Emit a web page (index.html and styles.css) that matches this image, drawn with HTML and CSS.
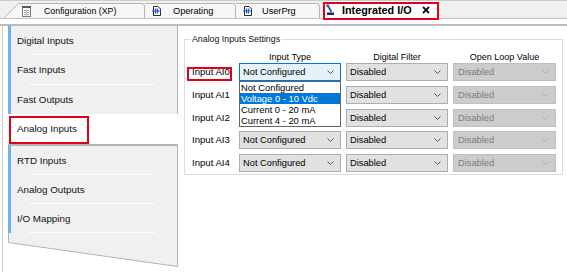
FILE: index.html
```html
<!DOCTYPE html>
<html>
<head>
<meta charset="utf-8">
<link rel="stylesheet" href="styles.css">
</head>
<body>
<div class="tabstrip">
  <svg class="slant" width="15" height="15" viewBox="0 0 15 15"><polygon points="0,15 15,0 15,15" fill="#f6f6f6"/><line x1="0" y1="15" x2="15" y2="0" stroke="#b5b5b5"/></svg>
  <div class="tab tab-config">
    <svg class="ico" width="11" height="11" viewBox="0 0 11 11"><rect x="1.5" y="1.5" width="8" height="9" fill="#fafafa" stroke="#7a7a7a"/><rect x="1" y="0" width="9" height="2" fill="#5a5a5a"/><path d="M3 4.5h5M3 6.5h5M3 8.5h5" stroke="#a8a8a8"/><path d="M5.5 3v7" stroke="#c4c4c4"/></svg>
    <span class="tab-label">Configuration (XP)</span>
  </div>
  <div class="tab tab-op">
    <svg class="ico" width="9" height="10" viewBox="0 0 9 10"><path d="M1.5 0.5H6L8.5 3V9.5H1.5Z" fill="#fff" stroke="#2b2b2b"/><path d="M0 5h9" stroke="#1b5fd6"/><path d="M3.5 2.5v5M5.5 2.5v5" stroke="#1b5fd6" stroke-width="1.3"/></svg>
    <span class="tab-label">Operating</span>
  </div>
  <div class="tab tab-prg">
    <svg class="ico" width="9" height="10" viewBox="0 0 9 10"><path d="M1.5 0.5H6L8.5 3V9.5H1.5Z" fill="#fff" stroke="#2b2b2b"/><path d="M0 5h9" stroke="#1b5fd6"/><path d="M3.5 2.5v5M5.5 2.5v5" stroke="#1b5fd6" stroke-width="1.3"/></svg>
    <span class="tab-label">UserPrg</span>
  </div>
  <div class="tab tab-io active">
    <svg class="ico" width="8" height="11" viewBox="0 0 8 11"><circle cx="1.8" cy="1.8" r="1.5" fill="#1f5fbf"/><path d="M2 2L5.5 8" stroke="#1f5fbf" stroke-width="1.8"/><rect x="1" y="8.5" width="7" height="2.5" fill="#1c2a5a"/></svg>
    <span class="tab-label">Integrated I/O</span>
    <svg class="close" width="8" height="8" viewBox="0 0 8 8"><path d="M1 1L7 7M7 1L1 7" stroke="#111" stroke-width="1.8"/></svg>
  </div>
</div>

<div class="workspace">
  <nav class="sidebar">
    <div class="vgroup">
      <div class="vtab sep">Digital Inputs</div>
      <div class="vtab sep">Fast Inputs</div>
      <div class="vtab">Fast Outputs</div>
    </div>
    <div class="vtab-active">Analog Inputs</div>
    <div class="vgroup lower">
      <div class="vtab sep">RTD Inputs</div>
      <div class="vtab sep">Analog Outputs</div>
      <div class="vtab sep">I/O Mapping</div>
    </div>
    <svg class="tail" width="170" height="34" viewBox="0 0 170 34"><polygon points="0,0 170,0 170,34 0,9" fill="#f0f0f0"/><path d="M0.5 0V9.5L169.5 33.5V0" fill="none" stroke="#b4b4b4"/></svg>
  </nav>

  <section class="content">
    <fieldset class="group">
      <legend>Analog Inputs Settings</legend>
      <div class="cols head">
        <span></span>
        <span>Input Type</span>
        <span>Digital Filter</span>
        <span>Open Loop Value</span>
      </div>
      <div class="cols rows">
        <span class="lbl"><span class="marked">Input AI0</span></span>
        <div class="combo focus">
          <span>Not Configured</span>
          <svg class="chev" width="7" height="4" viewBox="0 0 7 4"><path d="M0.5 0.5L3.5 3.5L6.5 0.5" fill="none" stroke="#555"/></svg>
          <div class="popup">
            <div class="opt">Not Configured</div>
            <div class="opt hl">Voltage 0 - 10 Vdc</div>
            <div class="opt">Current 0 - 20 mA</div>
            <div class="opt">Current 4 - 20 mA</div>
          </div>
        </div>
        <div class="combo"><span>Disabled</span><svg class="chev" width="7" height="4" viewBox="0 0 7 4"><path d="M0.5 0.5L3.5 3.5L6.5 0.5" fill="none" stroke="#555"/></svg></div>
        <div class="combo disabled"><span>Disabled</span><svg class="chev" width="7" height="4" viewBox="0 0 7 4"><path d="M0.5 0.5L3.5 3.5L6.5 0.5" fill="none" stroke="#aaa"/></svg></div>

        <span class="lbl">Input AI1</span>
        <div class="combo covered"></div>
        <div class="combo"><span>Disabled</span><svg class="chev" width="7" height="4" viewBox="0 0 7 4"><path d="M0.5 0.5L3.5 3.5L6.5 0.5" fill="none" stroke="#555"/></svg></div>
        <div class="combo disabled"><span>Disabled</span><svg class="chev" width="7" height="4" viewBox="0 0 7 4"><path d="M0.5 0.5L3.5 3.5L6.5 0.5" fill="none" stroke="#aaa"/></svg></div>

        <span class="lbl">Input AI2</span>
        <div class="combo covered"></div>
        <div class="combo"><span>Disabled</span><svg class="chev" width="7" height="4" viewBox="0 0 7 4"><path d="M0.5 0.5L3.5 3.5L6.5 0.5" fill="none" stroke="#555"/></svg></div>
        <div class="combo disabled"><span>Disabled</span><svg class="chev" width="7" height="4" viewBox="0 0 7 4"><path d="M0.5 0.5L3.5 3.5L6.5 0.5" fill="none" stroke="#aaa"/></svg></div>

        <span class="lbl">Input AI3</span>
        <div class="combo"><span>Not Configured</span><svg class="chev" width="7" height="4" viewBox="0 0 7 4"><path d="M0.5 0.5L3.5 3.5L6.5 0.5" fill="none" stroke="#555"/></svg></div>
        <div class="combo"><span>Disabled</span><svg class="chev" width="7" height="4" viewBox="0 0 7 4"><path d="M0.5 0.5L3.5 3.5L6.5 0.5" fill="none" stroke="#555"/></svg></div>
        <div class="combo disabled"><span>Disabled</span><svg class="chev" width="7" height="4" viewBox="0 0 7 4"><path d="M0.5 0.5L3.5 3.5L6.5 0.5" fill="none" stroke="#aaa"/></svg></div>

        <span class="lbl">Input AI4</span>
        <div class="combo"><span>Not Configured</span><svg class="chev" width="7" height="4" viewBox="0 0 7 4"><path d="M0.5 0.5L3.5 3.5L6.5 0.5" fill="none" stroke="#555"/></svg></div>
        <div class="combo"><span>Disabled</span><svg class="chev" width="7" height="4" viewBox="0 0 7 4"><path d="M0.5 0.5L3.5 3.5L6.5 0.5" fill="none" stroke="#555"/></svg></div>
        <div class="combo disabled"><span>Disabled</span><svg class="chev" width="7" height="4" viewBox="0 0 7 4"><path d="M0.5 0.5L3.5 3.5L6.5 0.5" fill="none" stroke="#aaa"/></svg></div>
      </div>
    </fieldset>
  </section>
</div>
</body>
</html>
```

FILE: styles.css
```css
html, body {
  margin: 0;
  padding: 0;
}
body {
  width: 567px;
  height: 272px;
  overflow: hidden;
  background: #fff;
  color: #000;
  font-family: "Liberation Sans", Arial, sans-serif;
}

/* ---------- document tab strip ---------- */
.tabstrip {
  height: 19px;
  box-sizing: border-box;
  background: #f0f0f0;
  border-top: 1px solid #cdcdcd;
  border-bottom: 1px solid #c2c2c2;
  display: flex;
  align-items: flex-end;
  padding-left: 4px;
}
.slant {
  display: block;
  flex: none;
}
.tab {
  flex: none;
  height: 15px;
  box-sizing: border-box;
  background: #f6f6f6;
  border-top: 1px solid #b5b5b5;
  border-right: 1px solid #b5b5b5;
  border-radius: 0 4px 0 0;
  display: flex;
  align-items: center;
  font-size: 9.2px;
  color: #000;
  white-space: nowrap;
}
.ico {
  display: block;
  flex: none;
}
.tab-config {
  width: 126px;
  padding-left: 2px;
}
.tab-config .tab-label {
  margin-left: 12px;
  font-size: 8.8px;
}
.tab-op {
  width: 91px;
  padding-left: 7px;
}
.tab-op .tab-label {
  margin-left: 12px;
}
.tab-prg {
  width: 84px;
  padding-left: 7px;
}
.tab-prg .tab-label {
  margin-left: 10px;
}
.tab-io {
  width: 116px;
  margin-left: 3px;
  padding-left: 3px;
  padding-right: 9px;
  position: relative;
}
.tab.active {
  height: 17px;
  background: #fff;
  border: none;
}
.tab-io .tab-label {
  margin-left: 8px;
  font-weight: bold;
  font-size: 10.8px;
}
.close {
  display: block;
  margin-left: auto;
}
.tab-io::after {
  content: "";
  position: absolute;
  left: 0;
  right: 0;
  top: 1px;
  bottom: -2px;
  border: 2px solid #e2001a;
}

/* ---------- workspace ---------- */
.workspace {
  margin-top: 5px;
  border-top: 2px solid #bcbcbc;
  display: flex;
  height: 246px;
}

/* ---------- left vertical tabs ---------- */
.sidebar {
  flex: none;
  width: 176px;
  box-sizing: border-box;
  margin-left: 2px;
  border-left: 1px solid #cfcfcf;
  padding-left: 5px;
}
.vgroup {
  background: #f0f0f0;
  border-right: 1px solid #b4b4b4;
}
.vgroup.lower {
  border-top: 2px solid #b4b4b4;
}
.vtab {
  position: relative;
  height: 29.33px;
  box-sizing: border-box;
  border-left: 3px solid #66b2f2;
  padding-left: 6px;
  display: flex;
  align-items: center;
  font-size: 9.8px;
  color: #111;
}
.vgroup.lower .vtab {
  height: 29px;
}
.vtab.sep::after {
  content: "";
  position: absolute;
  left: 18px;
  right: 22px;
  bottom: 0;
  height: 1px;
  background: #fdfdfd;
}
.vtab-active {
  position: relative;
  height: 30px;
  box-sizing: border-box;
  padding-left: 9px;
  display: flex;
  align-items: center;
  font-size: 9.8px;
  color: #111;
  background: #fff;
}
.vtab-active::after {
  content: "";
  position: absolute;
  left: 1px;
  top: 2px;
  width: 80px;
  height: 28px;
  box-sizing: border-box;
  border: 2px solid #e2001a;
}
.tail {
  display: block;
}

/* ---------- settings group ---------- */
.content {
  flex: 1;
  padding: 8px 6px 0 6px;
}
.group {
  margin: 0;
  min-width: 0;
  border: 1px solid #dcdcdc;
  padding: 5px 6px 2px 7px;
}
.group legend {
  padding: 0 1px;
  margin-left: -1px;
  font-size: 8.8px;
  line-height: 11px;
  color: #111;
}
.cols {
  display: grid;
  grid-template-columns: 42px 102px 102px 103px;
  column-gap: 5px;
}
.head {
  height: 13px;
  line-height: 12px;
  font-size: 9px;
  text-align: center;
  padding-top: 1px;
  box-sizing: border-box;
}
.rows {
  row-gap: 4.75px;
  align-items: center;
}
.lbl {
  font-size: 9.6px;
  line-height: 12px;
  white-space: nowrap;
}
.marked {
  position: relative;
  display: inline-block;
}
.marked::after {
  content: "";
  position: absolute;
  left: -5px;
  right: -2px;
  top: 1px;
  bottom: -3px;
  border: 2px solid #e2001a;
}
.combo {
  position: relative;
  height: 18px;
  box-sizing: border-box;
  border: 1px solid #adadad;
  background: #e1e1e1;
  display: flex;
  align-items: center;
  justify-content: space-between;
  padding: 0 6px 0 3px;
  font-size: 9.3px;
  white-space: nowrap;
}
.chev {
  display: block;
  flex: none;
}
.combo.focus {
  border-color: #0078d7;
  background: #e5f1fb;
}
.combo.disabled {
  background: #cccccc;
  border-color: #bfbfbf;
  color: #7c7c7c;
  padding-left: 4px;
}
.popup {
  position: absolute;
  top: calc(100% + 1px);
  left: -1px;
  width: 102px;
  box-sizing: border-box;
  border: 1px solid #646464;
  background: #fff;
  z-index: 2;
  color: #000;
}
.opt {
  height: 11px;
  line-height: 11px;
  padding-left: 1px;
  font-size: 9.4px;
}
.opt.hl {
  background: #0078d7;
  color: #fff;
}
```
